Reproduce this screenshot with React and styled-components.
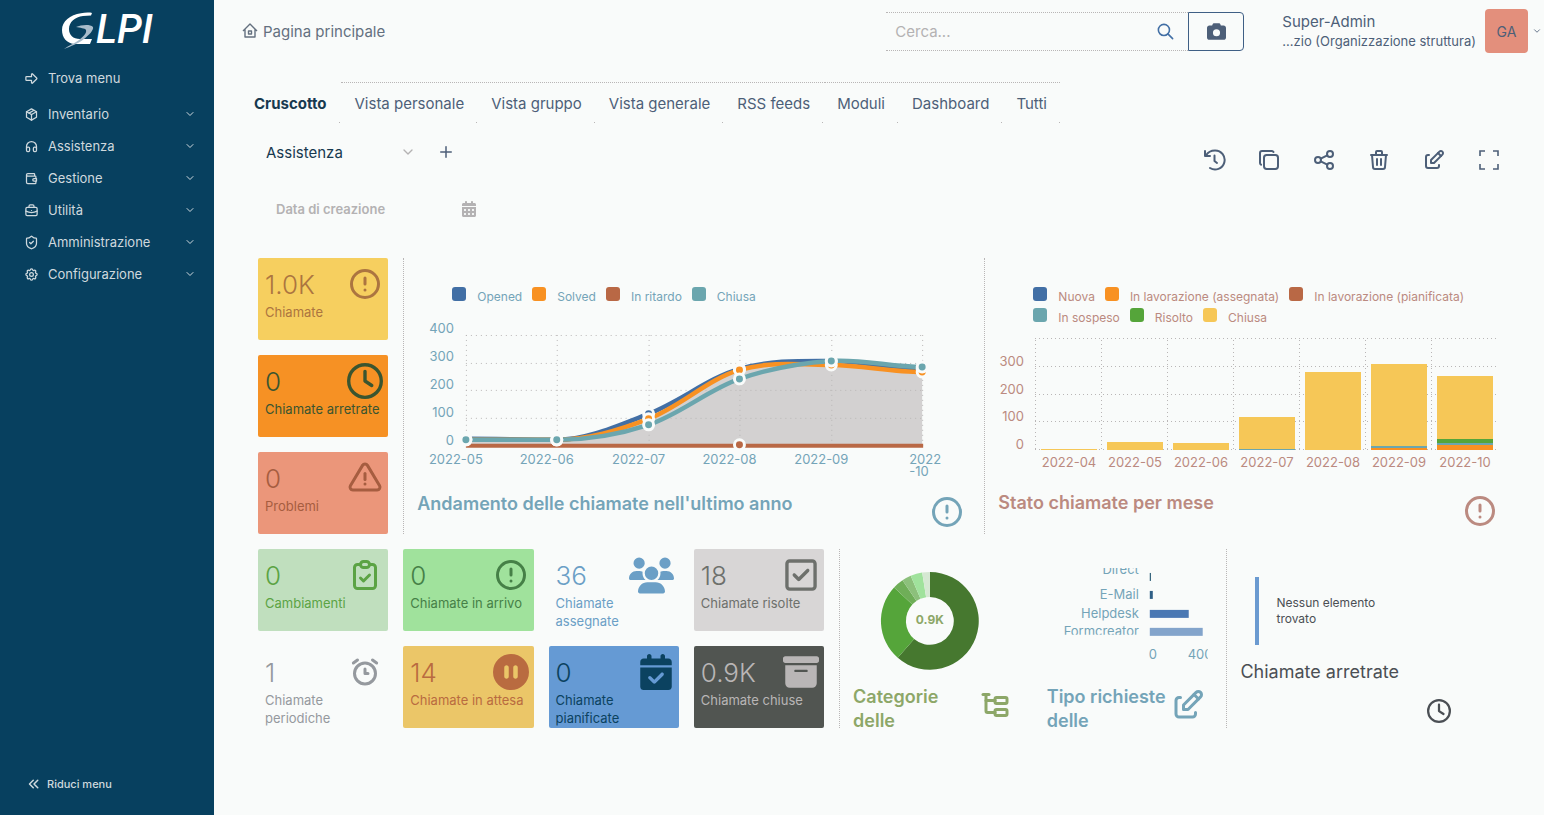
import React from "react";
import styled, { createGlobalStyle } from "styled-components";
import { ShieldCheck } from "lucide-react";
import {
  TbArrowBigRight, TbPackage, TbHeadphones, TbWallet, TbBriefcase, TbSettings,
  TbChevronDown, TbChevronsLeft, TbSearch, TbCopy, TbShare, TbTrash, TbEdit, TbPlus,
  TbAlertCircle, TbAlertTriangle, TbClipboardCheck, TbAlarm, TbSubtask,
} from "react-icons/tb";
import {
  FaCamera, FaRegClock, FaUsers, FaRegSquareCheck, FaCirclePause, FaCalendarCheck,
  FaBoxArchive, FaCalendarDays,
} from "react-icons/fa6";

const C = {
  page: "#f9fbfa",
  side: "#07405f",
  text: "#4d5f78",
  dark: "#17394f",
  muted: "#b4b2b3",
  dots: "#b9b6b6",
  blue: "#426fa5",
  orange: "#f89122",
  brick: "#b96845",
  teal: "#6ba6ae",
  green: "#55a53a",
  yellow: "#f6c757",
  steel: "#74a4b8",
  rose: "#bb8a80",
};

const Global = createGlobalStyle`
  *, *::before, *::after { box-sizing: border-box; }
  body { margin: 0; background: ${C.page}; font-family: Inter, "Liberation Sans", sans-serif; color: ${C.text}; }
  button, input, select { font: inherit; color: inherit; }
  button { border: 0; background: none; padding: 0; cursor: pointer; display: flex; align-items: center; justify-content: center; }
  a { color: inherit; text-decoration: none; }
  svg { flex: none; }
`;

const Shell = styled.div`display: flex; min-height: 100vh;`;

const Sidebar = styled.aside`
  flex: 0 0 214px;
  display: flex;
  flex-direction: column;
  background: ${C.side};
  color: #cfd9de;
  font-size: 13px;
`;
const Brand = styled.a`
  display: flex; justify-content: center; height: 62px; padding-top: 8px;
  svg { overflow: visible; }
`;
const Menu = styled.nav`display: flex; flex-direction: column;`;
const MenuItem = styled.button`
  && { justify-content: flex-start; }
  gap: 9px;
  height: 32px;
  padding: 0 18px 0 24px;
  span { flex: 1; text-align: left; }
  &:first-child { margin-bottom: 4px; }
`;
const Collapse = styled.button`
  && { justify-content: flex-start; }
  gap: 4px;
  margin-top: auto;
  height: 32px;
  margin-bottom: 16px;
  padding-left: 25px;
  font-size: 11px;
  font-weight: 500;
`;

const Main = styled.main`flex: 1; min-width: 0; display: flex; flex-direction: column;`;

const Header = styled.header`
  display: flex;
  align-items: center;
  height: 62px;
  padding: 0 2px 0 28px;
`;
const Crumb = styled.a`display: flex; align-items: center; gap: 5px; font-size: 15px; color: #64707f; margin-right: auto;`;
const Search = styled.form`display: flex; width: 358px; height: 39px; margin-right: 38px;`;
const SearchField = styled.label`
  flex: 1;
  display: flex;
  align-items: center;
  padding: 0 13px 0 9px;
  border: 1px dotted ${C.dots};
  border-width: 1px 0;
  color: ${C.blue};
  input {
    flex: 1; min-width: 0; border: 0; outline: 0; padding: 0; background: none; font-size: 15px;
    &::placeholder { color: ${C.muted}; opacity: 1; }
  }
`;
const CameraButton = styled.button`
  width: 56px;
  && { border: 1px solid #3f5f85; }
  border-radius: 0 4px 4px 0;
`;
const User = styled.button`gap: 4px; text-align: left;`;
const UserText = styled.span`display: flex; flex-direction: column;`;
const UserName = styled.span`font-size: 15px; line-height: 20px;`;
const UserEntity = styled.span`font-size: 13px; line-height: 18px;`;
const Avatar = styled.span`
  display: flex; align-items: center; justify-content: center;
  width: 43px; height: 44px; margin-left: 5px; border-radius: 4px; background: #e38f7c; font-size: 14px;
`;

const Tabs = styled.div`display: flex; gap: 1px; height: 41px; margin: 20px 26px 0;`;
const Tab = styled.button`
  position: relative;
  padding: 0 ${(p) => (p.$active ? 14 : 13)}px;
  && { border-top: 1px dotted ${(p) => (p.$active ? "transparent" : C.dots)}; }
  font-size: 15px;
  font-weight: ${(p) => (p.$active ? 700 : 400)};
  color: ${(p) => (p.$active ? C.dark : C.text)};
  &::after {
    content: ""; position: absolute; right: 0; bottom: 0; width: 1px; height: 1px; background: ${C.dots};
  }
`;

const Toolbar = styled.div`
  display: flex;
  align-items: flex-start;
  height: 64px;
  padding: 15px 28px 0 52px;
`;
const Picker = styled.label`
  display: flex; align-items: center; width: 150px; height: 28px;
  color: ${C.muted};
  select {
    flex: 1; min-width: 0; appearance: none; border: 0; outline: 0; padding: 0; background: none;
    font-size: 15px; color: ${C.dark};
  }
`;
const AddButton = styled.button`width: 28px; height: 28px; margin: 0 auto 0 16px;`;
const Actions = styled.div`
  display: flex; margin-top: 8px;
  button { width: 55px; height: 28px; }
`;

const Filter = styled.label`
  display: flex;
  align-items: center;
  width: 201px;
  height: 32px;
  margin: 6px 0 0 62px;
  color: ${C.muted};
  input {
    flex: 1; min-width: 0; border: 0; outline: 0; padding: 0; background: none; font-size: 13px; font-weight: 600;
    &::placeholder { color: ${C.muted}; opacity: 1; }
  }
`;

const Board = styled.section`
  display: grid;
  grid-template-columns: repeat(26, minmax(0, 1fr));
  grid-auto-rows: 82px;
  gap: 15px;
  margin: 33px 42px 88px 44px;
`;

const TileBox = styled.a`
  grid-area: ${(p) => p.$row} / ${(p) => p.$col} / span 1 / span 3;
  display: flex;
  flex-direction: column;
  gap: 1px;
  padding: 8px 5px 0 7px;
  border-radius: 2px;
  overflow: hidden;
  background: ${(p) => p.$bg};
  && { color: ${(p) => p.$fg}; }
`;
const TileTop = styled.span`
  display: flex; align-items: center; justify-content: space-between; height: 36px;
`;
const TileValue = styled.span`font-size: 26px; font-weight: 300;`;
const TileLabel = styled.span`font-size: 13px; line-height: 18px; white-space: pre;`;

const Panel = styled.article`
  grid-area: ${(p) => p.$area};
  display: flex;
  flex-direction: column;
  min-width: 0;
  overflow: hidden;
  color: ${(p) => p.$fg};
  border-left: 1px dotted ${(p) => (p.$plain ? "transparent" : C.dots)};
`;
const Legend = styled.ul`
  display: flex;
  flex-wrap: wrap;
  gap: 1px 10px;
  list-style: none;
  margin: 0;
  padding: 29px 20px 0 48px;
  font-size: 12px;
  line-height: 20px;
`;
const Key = styled.li`
  display: flex;
  align-items: flex-start;
  gap: 11px;
  &::before { content: ""; width: 14px; height: 14px; border-radius: 3px; background: ${(p) => p.$c}; }
`;
const Plot = styled.svg`
  display: block;
  width: 100%;
  height: ${(p) => p.$h}px;
  margin-top: ${(p) => p.$top || 0}px;
  font-size: 13px;
  fill: currentColor;
`;
const PanelFoot = styled.div`
  display: flex;
  justify-content: space-between;
  gap: 4px;
  padding: 0 ${(p) => p.$right || 5}px 0 13px;
  margin-top: auto;
  height: ${(p) => p.$h || 43}px;
`;
const PanelTitle = styled.h2`
  margin: 0;
  font-size: 18px;
  line-height: 24px;
  font-weight: ${(p) => (p.$light ? 400 : 600)};
`;
const FootIcon = styled.span`display: flex; margin-top: ${(p) => p.$top || 0}px;`;
const Empty = styled.div`
  display: flex;
  align-items: center;
  height: 68px;
  margin: 28px 0 0 28px;
  padding-left: 17px;
  border-left: 4px solid #6b9ad0;
  font-size: 12px;
  line-height: 16px;
  white-space: pre-line;
`;

const HomeIcon = () => (
  <svg width="16" height="16" viewBox="0 0 16 16" fill="none" stroke="currentColor" strokeWidth="1.4" strokeLinejoin="round">
    <path d="M1 8 8 1l7 7M3 6.500V14h10V6.500" />
    <path d="M6.500 8h3v3h-3z" />
  </svg>
);

const HistoryIcon = ({ size }) => (
  <svg width={size} height={size} viewBox="0 0 24 24" fill="none" stroke="currentColor" strokeWidth="2" strokeLinecap="round" strokeLinejoin="round">
    <path d="M3 3v5h5" />
    <path d="M4 7.500C6 4 9 2.500 13 2.500a9.500 9.500 0 1 1-5 17.500" />
    <path d="M12.500 7.500V13l2.500 2" />
  </svg>
);

const CornersIcon = ({ size }) => (
  <svg width={size} height={size} viewBox="0 0 24 24" fill="none" stroke="currentColor" strokeWidth="1.6">
    <path d="M3 8V3h5M16 3h5v5M21 16v5h-5M8 21H3v-5" />
  </svg>
);

const Logo = () => (
  <svg width="94" height="44" viewBox="60 8 94 44" aria-label="GLPI">
    <path fill="#fff" d="M92 13c-2-.6-7-.6-11 .2C70 15 62 21 62 30c0 8 5 13 12 14h16l2-5H80c-7 0-11-4-11-10 0-7 6-12 14-13l8-.5z" />
    <path fill="#a9bccb" d="M76 27c5-2 14-3 17 0 1 3-4 8-9 12-6 5-13 7-20 10 5-4 10-5 15-9 4-3 8-7 7-10-1-2-6-2-10-3z" />
    <text x="96" y="43" fill="#fff" fontFamily="Roboto" fontStyle="italic" fontWeight="500" fontSize="40">LPI</text>
  </svg>
);

const MENU = [
  ["Trova menu", TbArrowBigRight],
  ["Inventario", TbPackage],
  ["Assistenza", TbHeadphones],
  ["Gestione", TbWallet],
  ["Utilità", TbBriefcase],
  ["Amministrazione", ShieldCheck],
  ["Configurazione", TbSettings],
];

const TABS = ["Cruscotto", "Vista personale", "Vista gruppo", "Vista generale", "RSS feeds", "Moduli", "Dashboard", "Tutti"];

const ACTIONS = [
  ["Cronologia", HistoryIcon], ["Clona", TbCopy], ["Condividi", TbShare],
  ["Elimina", TbTrash], ["Modifica", TbEdit], ["Schermo intero", CornersIcon],
];

const TILES = [
  { row: 1, col: 1, value: "1.0K", label: "Chiamate", bg: "#f6cf5f", fg: "#ac7540", Icon: TbAlertCircle },
  { row: 2, col: 1, value: "0", label: "Chiamate arretrate", bg: "#f69124", fg: "#3a5530", Icon: FaRegClock },
  { row: 3, col: 1, value: "0", label: "Problemi", bg: "#eb967a", fg: "#a65d40", Icon: TbAlertTriangle },
  { row: 4, col: 1, value: "0", label: "Cambiamenti", bg: "#c0dfbe", fg: "#5ba344", Icon: TbClipboardCheck },
  { row: 4, col: 4, value: "0", label: "Chiamate in arrivo", bg: "#a0e29c", fg: "#468047", Icon: TbAlertCircle },
  { row: 4, col: 7, value: "36", label: "Chiamate\nassegnate", bg: "transparent", fg: "#6b9fc6", Icon: FaUsers, size: 45 },
  { row: 4, col: 10, value: "18", label: "Chiamate risolte", bg: "#d8d6d6", fg: "#6d706c", Icon: FaRegSquareCheck },
  { row: 5, col: 1, value: "1", label: "Chiamate\nperiodiche", bg: "transparent", fg: "#95999e", Icon: TbAlarm },
  { row: 5, col: 4, value: "14", label: "Chiamate in attesa", bg: "#ebc668", fg: "#b96b40", Icon: FaCirclePause },
  { row: 5, col: 7, value: "0", label: "Chiamate\npianificate", bg: "#659ad4", fg: "#0b4260", Icon: FaCalendarCheck },
  { row: 5, col: 10, value: "0.9K", label: "Chiamate chiuse", bg: "#515551", fg: "#b9b6b6", Icon: FaBoxArchive },
];

function Tile({ t }) {
  return (
    <TileBox href="#" $row={t.row} $col={t.col} $bg={t.bg} $fg={t.fg}>
      <TileTop>
        <TileValue>{t.value}</TileValue>
        <t.Icon size={t.size || 36} />
      </TileTop>
      <TileLabel>{t.label}</TileLabel>
    </TileBox>
  );
}

const X = [62, 153, 245, 336, 428, 519];

// Cubic curve through the monthly values; each month's slope follows its two neighbours.
const smooth = (ys) => {
  const slope = (k) => (k <= 1 || k >= ys.length - 1 ? 0 : (ys[k + 1] - ys[k - 1]) / 2);
  return ys
    .map((y, i) => (i
      ? `C${X[i - 1] + 31} ${ys[i - 1] + slope(i - 1) / 3} ${X[i] - 31} ${y - slope(i) / 3} ${X[i]} ${y}`
      : `M${X[0]} ${y}`))
    .join("");
};

const SERIES = [
  [C.blue, [121, 122, 96, 51, 43, 51]],
  [C.orange, [122, 122, 101, 52, 47, 54]],
  [C.teal, [122, 122, 107, 61, 43, 49]],
];

function LineChart() {
  return (
    <Plot $h={174} $top={11} viewBox="0 0 566 174" preserveAspectRatio="xMinYMin meet" role="img">
      <g stroke={C.dots} strokeDasharray="1 4" fill="none">
        {[17, 45, 72, 100].map((y) => <path key={y} d={`M62 ${y}.5H520`} />)}
        {X.map((x) => <path key={x} d={`M${x}.5 17V128`} />)}
      </g>
      <path d={`${smooth(SERIES[1][1])}V129H62Z`} fill="#b9b5b5" fillOpacity="0.6" />
      <path d="M62 128H520" stroke={C.brick} strokeWidth="4" />
      {SERIES.map(([c, ys]) => <path key={c} d={smooth(ys)} stroke={c} strokeWidth="4.500" fill="none" />)}
      <circle cx={336} cy={127} r="5" fill={C.brick} stroke={C.page} strokeWidth="3" />
      {SERIES.map(([c, ys]) => ys.map((y, i) => (
        <circle key={c + i} cx={X[i]} cy={y} r="5" fill={c} stroke={C.page} strokeWidth="3" />
      )))}
      <g textAnchor="end">
        {[[400, 15], [300, 43], [200, 71], [100, 99], [0, 127]].map(([v, y]) => <text key={v} x="50" y={y}>{v}</text>)}
      </g>
      <g textAnchor="middle">
        {["05", "06", "07", "08", "09"].map((m, i) => <text key={m} x={X[i] - 10} y="146">{`2022-${m}`}</text>)}
      </g>
      <text x="506" y="146">2022</text>
      <text x="506" y="158">-10</text>
    </Plot>
  );
}

const BARS = [
  ["04", [[C.yellow, 109, 110]]],
  ["05", [[C.yellow, 102, 110]]],
  ["06", [[C.yellow, 103, 110]]],
  ["07", [[C.yellow, 77, 109], [C.teal, 109, 110]]],
  ["08", [[C.yellow, 32, 110]]],
  ["09", [[C.yellow, 24, 106], [C.teal, 106, 108], [C.orange, 108, 110]]],
  ["10", [[C.yellow, 36, 99], [C.green, 99, 103], [C.teal, 103, 105], [C.orange, 105, 110]]],
];

function BarChart() {
  return (
    <Plot $h={157} viewBox="0 0 516 157" preserveAspectRatio="xMinYMin meet" role="img">
      <g transform="translate(0 12)">
        <g stroke={C.dots} strokeDasharray="1 3" fill="none">
          {[-1, 26, 54, 81, 109].map((y) => <path key={y} d={`M50 ${y}.5H511`} />)}
          {BARS.map(([m], i) => <path key={m} d={`M${50 + i * 66}.5 0V110`} />)}
        </g>
        {BARS.map(([m, segs], i) => (
          <g key={m}>
            {segs.map(([c, a, b]) => <rect key={c} x={56 + i * 66} y={a} width="56" height={b - a} fill={c} />)}
            <text x={84 + i * 66} y="127" textAnchor="middle">{`2022-${m}`}</text>
          </g>
        ))}
        <g textAnchor="end">
          {[[300, 26], [200, 54], [100, 81], [0, 109]].map(([v, y]) => <text key={v} x="39" y={y}>{v}</text>)}
        </g>
      </g>
    </Plot>
  );
}

const SLICES = [
  ["#46782f", 0, 221], [C.green, 221, 313], ["#6fae58", 313, 326], ["#8cc07b", 326, 337],
  ["#a0e29c", 337, 351], ["#d5e8d2", 351, 360],
];
const pt = (r, deg) => {
  const t = (deg * Math.PI) / 180;
  return `${(90 + r * Math.sin(t)).toFixed(2)} ${(62 - r * Math.cos(t)).toFixed(2)}`;
};

function Donut() {
  return (
    <Plot $h={120} $top={10} viewBox="0 0 178 120" preserveAspectRatio="xMinYMin meet" role="img">
      {SLICES.map(([c, a, b]) => {
        const big = b - a > 180 ? 1 : 0;
        return <path key={c} fill={c} d={`M${pt(49, a)}A49 49 0 ${big} 1 ${pt(49, b)}L${pt(24, b)}A24 24 0 ${big} 0 ${pt(24, a)}Z`} />;
      })}
      <text x="90" y="65" textAnchor="middle" fontWeight="700" fontSize="12">0.9K</text>
    </Plot>
  );
}

const TYPES = [
  { name: "Direct", textY: 25, y: 24, w: 1, fill: C.side },
  { name: "E-Mail", textY: 50, y: 42, w: 3, fill: "#2f5f86" },
  { name: "Helpdesk", textY: 69, y: 61, w: 39, fill: "#4a78b3" },
  { name: "Formcreator", textY: 87, y: 79, w: 53, fill: "#83a4cb" },
];

function TypeChart() {
  return (
    <Plot $h={120} viewBox="0 0 178 120" preserveAspectRatio="xMinYMin meet" role="img">
      <svg x="0" y="19" width="106" height="67" viewBox="0 19 106 67">
        {TYPES.map((t) => <text key={t.name} x="105" y={t.textY} textAnchor="end">{t.name}</text>)}
      </svg>
      {TYPES.map((t) => <rect key={t.name} x="116" y={t.y} width={t.w} height="8" fill={t.fill} />)}
      <svg x="110" y="96" width="64" height="20" viewBox="110 96 64 20">
        <text x="119" y="110" textAnchor="middle">0</text>
        <text x="154" y="110">400</text>
      </svg>
    </Plot>
  );
}

export default function App() {
  return (
    <>
      <Global />
      <Shell>
        <Sidebar>
          <Brand href="#"><Logo /></Brand>
          <Menu>
            {MENU.map(([name, Icon], i) => (
              <MenuItem key={name}>
                <Icon size={15} />
                <span>{name}</span>
                {i > 0 && <TbChevronDown size={12} />}
              </MenuItem>
            ))}
          </Menu>
          <Collapse><TbChevronsLeft size={18} />Riduci menu</Collapse>
        </Sidebar>
        <Main>
          <Header>
            <Crumb href="#"><HomeIcon />Pagina principale</Crumb>
            <Search onSubmit={(e) => e.preventDefault()}>
              <SearchField>
                <input type="search" placeholder="Cerca..." aria-label="Cerca" />
                <TbSearch size={19} />
              </SearchField>
              <CameraButton type="button" aria-label="Fotocamera"><FaCamera size={19} /></CameraButton>
            </Search>
            <User>
              <UserText>
                <UserName>Super-Admin</UserName>
                <UserEntity>...zio (Organizzazione struttura)</UserEntity>
              </UserText>
              <Avatar>GA</Avatar>
              <TbChevronDown size={10} />
            </User>
          </Header>
          <Tabs role="tablist">
            {TABS.map((t, i) => <Tab key={t} role="tab" aria-selected={i === 0} $active={i === 0}>{t}</Tab>)}
          </Tabs>
          <Toolbar>
            <Picker>
              <select aria-label="Cruscotto"><option>Assistenza</option></select>
              <TbChevronDown size={16} />
            </Picker>
            <AddButton aria-label="Aggiungi"><TbPlus size={18} /></AddButton>
            <Actions>
              {ACTIONS.map(([name, Icon]) => <button key={name} aria-label={name}><Icon size={24} /></button>)}
            </Actions>
          </Toolbar>
          <Filter>
            <input placeholder="Data di creazione" aria-label="Data di creazione" />
            <FaCalendarDays size={16} />
          </Filter>
          <Board>
            {TILES.map((t) => <Tile key={t.label} t={t} />)}
            <Panel $area="1 / 4 / span 3 / span 12" $fg={C.steel}>
              <Legend>
                <Key $c={C.blue}>Opened</Key>
                <Key $c={C.orange}>Solved</Key>
                <Key $c={C.brick}>In ritardo</Key>
                <Key $c={C.teal}>Chiusa</Key>
              </Legend>
              <LineChart />
              <PanelFoot $right={4}>
                <PanelTitle>Andamento delle chiamate nell'ultimo anno</PanelTitle>
                <FootIcon $top={2}><TbAlertCircle size={36} /></FootIcon>
              </PanelFoot>
            </Panel>
            <Panel $area="1 / 16 / span 3 / span 11" $fg={C.rose}>
              <Legend>
                <Key $c={C.blue}>Nuova</Key>
                <Key $c={C.orange}>In lavorazione (assegnata)</Key>
                <Key $c={C.brick}>In lavorazione (pianificata)</Key>
                <Key $c={C.teal}>In sospeso</Key>
                <Key $c={C.green}>Risolto</Key>
                <Key $c={C.yellow}>Chiusa</Key>
              </Legend>
              <BarChart />
              <PanelFoot $right={4}>
                <PanelTitle>Stato chiamate per mese</PanelTitle>
                <FootIcon $top={2}><TbAlertCircle size={36} /></FootIcon>
              </PanelFoot>
            </Panel>
            <Panel $area="4 / 13 / span 2 / span 4" $fg="#8da768">
              <Donut />
              <PanelFoot>
                <PanelTitle>Categorie delle</PanelTitle>
                <FootIcon $top={2}><TbSubtask size={36} /></FootIcon>
              </PanelFoot>
            </Panel>
            <Panel $plain $area="4 / 17 / span 2 / span 4" $fg={C.steel}>
              <TypeChart />
              <PanelFoot>
                <PanelTitle>Tipo richieste delle</PanelTitle>
                <FootIcon $top={2}><TbEdit size={36} /></FootIcon>
              </PanelFoot>
            </Panel>
            <Panel $area="4 / 21 / span 2 / span 5" $fg="#4b4f54">
              <Empty>{"Nessun elemento\ntrovato"}</Empty>
              <PanelFoot $h={68} $right={3}>
                <PanelTitle $light>Chiamate arretrate</PanelTitle>
                <FootIcon $top={39}><FaRegClock size={24} /></FootIcon>
              </PanelFoot>
            </Panel>
          </Board>
        </Main>
      </Shell>
    </>
  );
}
